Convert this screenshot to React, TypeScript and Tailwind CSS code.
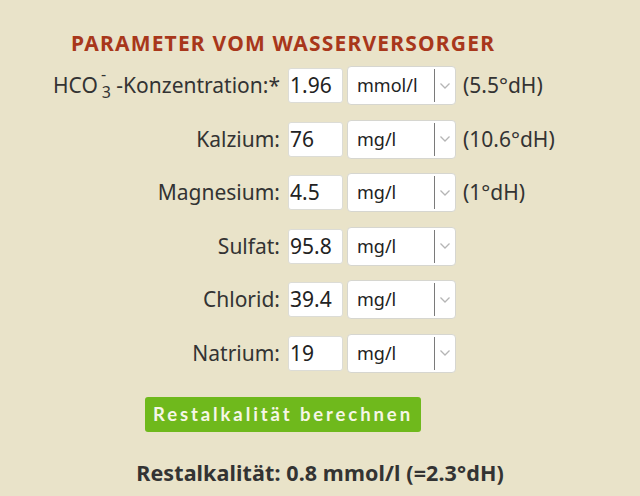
import React from "react";

type Row = {
  label: React.ReactNode;
  value: string;
  unit: string;
  extra?: string;
};

const rows: Row[] = [
  {
    label: (
      <>
        HCO
        <span className="relative inline-block w-[13px] text-[16px]">
          <span className="absolute left-[3px] top-[-13px] leading-none">-</span>
          <span className="relative top-[5px] leading-none">3</span>
        </span>{" "}
        -Konzentration:*
      </>
    ),
    value: "1.96",
    unit: "mmol/l",
    extra: "(5.5°dH)",
  },
  { label: "Kalzium:", value: "76", unit: "mg/l", extra: "(10.6°dH)" },
  { label: "Magnesium:", value: "4.5", unit: "mg/l", extra: "(1°dH)" },
  { label: "Sulfat:", value: "95.8", unit: "mg/l" },
  { label: "Chlorid:", value: "39.4", unit: "mg/l" },
  { label: "Natrium:", value: "19", unit: "mg/l" },
];

function Chevron() {
  return (
    <svg width="12" height="8" viewBox="0 0 12 8" fill="none">
      <path d="M1.5 1.5 L6 6 L10.5 1.5" stroke="#b5b5b5" strokeWidth="1.3" />
    </svg>
  );
}

function UnitSelect({ unit }: { unit: string }) {
  return (
    <div className="flex h-[39px] w-[109px] items-stretch rounded-[4px] border border-[#d6d6d0] bg-white">
      <div className="flex flex-1 items-center pl-[9px] text-[18px] text-[#222]">{unit}</div>
      <div className="my-[2px] w-px bg-[#7a7a7a]" />
      <div className="flex w-[20px] items-center justify-center">
        <Chevron />
      </div>
    </div>
  );
}

export default function App() {
  return (
    <div
      className="h-[496px] w-[640px] overflow-hidden bg-[#e9e3c9] text-[#333]"
      style={{ fontFamily: '"Noto Sans", "Open Sans", sans-serif' }}
    >
      <h2 className="pl-[71px] pt-[29px] text-[21px] font-bold leading-[28px] tracking-[1.2px] text-[#a8371b]">
        PARAMETER VOM WASSERVERSORGER
      </h2>
      <div className="mt-[2px] flex flex-col">
        {rows.map((r, i) => (
          <div key={i} className="flex h-[53.5px] items-center">
            <div className="w-[280px] whitespace-nowrap text-right text-[21px] leading-none text-[#333]">
              {r.label}
            </div>
            <div className="ml-[8px] flex h-[35px] w-[55px] items-center rounded-[3px] border border-[#dcdcd6] bg-white pl-[1px] text-[21px] text-[#222]">
              {r.value}
            </div>
            <div className="ml-[4px]">
              <UnitSelect unit={r.unit} />
            </div>
            {r.extra && <div className="ml-[7px] text-[21px] text-[#333]">{r.extra}</div>}
          </div>
        ))}
      </div>
      <div className="mt-[17px] pl-[145px]">
        <button
          className="flex h-[35px] w-[276px] items-center justify-center rounded-[3px] bg-[#6fb91c] text-[18.5px] font-bold tracking-[2.9px] text-[#f6f6e6]"
          style={{ fontFamily: "Lato, sans-serif" }}
        >
          Restalkalität berechnen
        </button>
      </div>
      <p className="mt-[25px] text-center text-[21.5px] font-bold tracking-[0.1px] text-[#333]">
        Restalkalität: 0.8 mmol/l (=2.3°dH)
      </p>
    </div>
  );
}
